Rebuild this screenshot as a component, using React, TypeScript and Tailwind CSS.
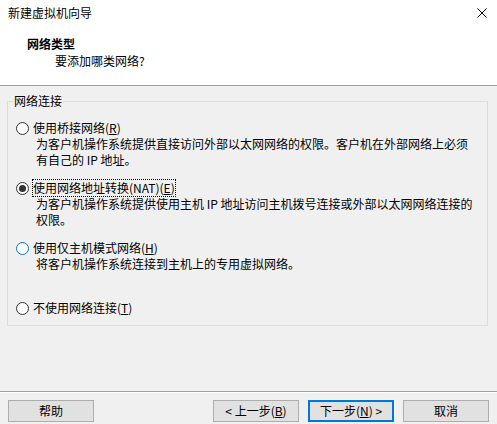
import React from "react";

function Radio({ checked = false, hover = false }: { checked?: boolean; hover?: boolean }) {
  return (
    <span
      className={
        "flex h-[13px] w-[13px] shrink-0 items-center justify-center rounded-full border bg-white " +
        (hover ? "border-[#0078d7]" : "border-[#333333]")
      }
    >
      {checked ? <span className="block h-[7px] w-[7px] rounded-full bg-[#333333]" /> : null}
    </span>
  );
}

function Option({
  label,
  lines,
  checked,
  hover,
  focus,
  last,
}: {
  label: React.ReactNode;
  lines: string[];
  checked?: boolean;
  hover?: boolean;
  focus?: boolean;
  last?: boolean;
}) {
  return (
    <div className={last ? "h-[16px]" : "h-[60px]"}>
      <div className="flex h-[16px] items-center gap-[4px] pl-[8px]">
        <Radio checked={checked} hover={hover} />
        <span className={"whitespace-nowrap " + (focus ? "outline-1 outline-dotted outline-black" : "")}>
          {label}
        </span>
      </div>
      {lines.map((l, i) => (
        <div key={i} className="whitespace-nowrap pl-[28px]">
          {l}
        </div>
      ))}
    </div>
  );
}

function Btn({ children, primary }: { children: React.ReactNode; primary?: boolean }) {
  return (
    <div
      className={
        "flex h-[22px] w-[86px] items-center justify-center bg-[#e1e1e1] " +
        (primary ? "border-2 border-[#0078d7]" : "border border-[#adadad]")
      }
    >
      {children}
    </div>
  );
}

export default function App() {
  return (
    <div
      className="flex h-[424px] w-[497px] flex-col overflow-hidden bg-[#f0f0f0] text-[12px] leading-[16px] text-black"
      style={{ fontFamily: '"Noto Sans CJK SC", "Noto Sans", sans-serif' }}
    >
      {/* title + header */}
      <div className="h-[85px] bg-white">
        <div className="flex h-[26px] items-center justify-between pl-[8px] pr-[10px]">
          <span>新建虚拟机向导</span>
          <svg width="10" height="10" viewBox="0 0 10 10" className="block">
            <path d="M0.5 0.5 L9.5 9.5 M9.5 0.5 L0.5 9.5" stroke="#000" strokeWidth="1" fill="none" />
          </svg>
        </div>
        <div className="mt-[10px] pl-[27px] font-bold">网络类型</div>
        <div className="mt-[1px] pl-[55px]">要添加哪类网络?</div>
      </div>
      <div className="h-[1px] bg-[#a0a0a0]" />

      {/* body */}
      <div className="h-[305px] pt-[15px]">
        <div className="ml-[7px] h-[225px] w-[481px] border border-[#dcdcdc]">
          <div className="-mt-[9px] ml-[5px] w-fit bg-[#f0f0f0] px-[1px]">网络连接</div>
          <div className="mt-[11px]">
            <Option
              label={
                <>
                  使用桥接网络(<u>R</u>)
                </>
              }
              lines={[
                "为客户机操作系统提供直接访问外部以太网网络的权限。客户机在外部网络上必须",
                "有自己的 IP 地址。",
              ]}
            />
            <Option
              checked
              focus
              label={
                <>
                  使用网络地址转换(NAT)(<u>E</u>)
                </>
              }
              lines={[
                "为客户机操作系统提供使用主机 IP 地址访问主机拨号连接或外部以太网网络连接的",
                "权限。",
              ]}
            />
            <Option
              hover
              label={
                <>
                  使用仅主机模式网络(<u>H</u>)
                </>
              }
              lines={["将客户机操作系统连接到主机上的专用虚拟网络。"]}
            />
            <Option
              last
              label={
                <>
                  不使用网络连接(<u>T</u>)
                </>
              }
              lines={[]}
            />
          </div>
        </div>
      </div>

      {/* footer */}
      <div className="h-[1px] bg-[#a0a0a0]" />
      <div className="h-[1px] bg-white" />
      <div className="mt-[7px] flex items-center pl-[8px] pr-[8px]">
        <Btn>帮助</Btn>
        <div className="ml-auto flex gap-[9px]">
          <Btn>
            &lt; 上一步(<u>B</u>)
          </Btn>
          <Btn primary>
            下一步(<u>N</u>) &gt;
          </Btn>
          <Btn>取消</Btn>
        </div>
      </div>
    </div>
  );
}
